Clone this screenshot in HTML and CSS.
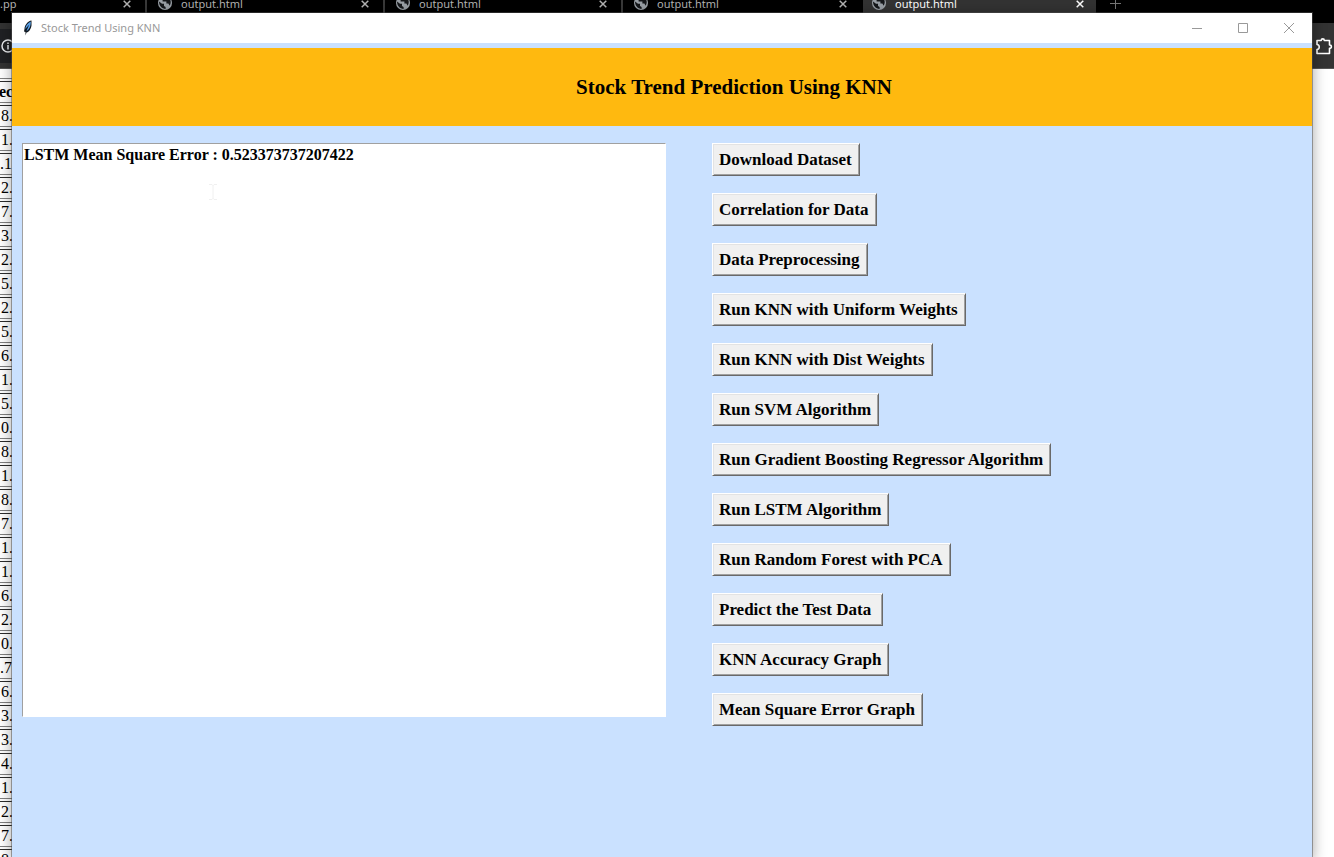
FILE: index.html
```html
<!DOCTYPE html>
<html lang="en">
<head>
<meta charset="utf-8">
<title>Stock Trend Using KNN</title>
<link rel="stylesheet" href="styles.css">
</head>
<body>
<svg class="defs" aria-hidden="true">
  <symbol id="globe" viewBox="0 0 14 14"><circle cx="7" cy="7" r="7" fill="#9aa0a6"/><path d="M1 5.600L4 7.800H6V10L7.600 11V13C4 13 1 10 1 5.600ZM8 1C7 1 5.600 2 5.600 3.200L4.600 4V5.600H8.400V7.600H10.400L11.600 9.800C13.500 7 13 3 10 1.700V3H8Z" fill="#15171a"/></symbol>
  <symbol id="cross" viewBox="0 0 8 8"><path d="M.7.7 7.300 7.300M7.300.7.7 7.300" fill="none" stroke="currentColor" stroke-width="1.500"/></symbol>
</svg>
<div class="desktop">
  <div class="browser">
    <nav class="tabs" aria-label="Tabs">
      <div class="tab tab-first"><span class="tab-name">.pp</span><button class="tab-close" aria-label="Close tab"><svg><use href="#cross"/></svg></button></div>
      <div class="tab"><svg class="globe"><use href="#globe"/></svg><span class="tab-name">output.html</span><button class="tab-close" aria-label="Close tab"><svg><use href="#cross"/></svg></button></div>
      <div class="tab"><svg class="globe"><use href="#globe"/></svg><span class="tab-name">output.html</span><button class="tab-close" aria-label="Close tab"><svg><use href="#cross"/></svg></button></div>
      <div class="tab tab-before"><svg class="globe"><use href="#globe"/></svg><span class="tab-name">output.html</span><button class="tab-close" aria-label="Close tab"><svg><use href="#cross"/></svg></button></div>
      <div class="tab tab-active"><svg class="globe"><use href="#globe"/></svg><span class="tab-name">output.html</span><button class="tab-close" aria-label="Close tab"><svg><use href="#cross"/></svg></button></div>
      <button class="tab-new" aria-label="New tab"><svg viewBox="0 0 11 11"><path d="M5.500 0V11M0 5.500H11" stroke="currentColor" fill="none"/></svg></button>
    </nav>
    <div class="toolbar">
      <div class="address"><svg viewBox="0 0 14 14"><circle cx="7" cy="7" r="6" fill="none" stroke="#e8eaed" stroke-width="1.500"/><path d="M7 6V10.500M7 3.500V5" stroke="#e8eaed" stroke-width="1.500"/></svg></div>
      <button class="extensions" aria-label="Extensions"><svg viewBox="0 0 18 18"><path d="M2 3.500H6.200C6.200 1.300 9.300 1.300 9.300 3.500H14.500V8C17 8 17 11.300 14.500 11.300V16.500H2V12.500C5 12.200 5 7.800 2 7.500Z" fill="none" stroke="#fff" stroke-width="1.600" stroke-linejoin="round"/></svg></button>
    </div>
    <table class="data">
      <thead><tr><th>ec</th></tr></thead>
      <tbody>
        <tr><td>8.</td></tr><tr><td>1.</td></tr><tr><td class="shifted">.1</td></tr><tr><td>2.</td></tr>
        <tr><td>7.</td></tr><tr><td>3.</td></tr><tr><td>2.</td></tr><tr><td>5.</td></tr>
        <tr><td>2.</td></tr><tr><td>5.</td></tr><tr><td>6.</td></tr><tr><td>1.</td></tr>
        <tr><td>5.</td></tr><tr><td>0.</td></tr><tr><td>8.</td></tr><tr><td>1.</td></tr>
        <tr><td>8.</td></tr><tr><td>7.</td></tr><tr><td>1.</td></tr><tr><td>1.</td></tr>
        <tr><td>6.</td></tr><tr><td>2.</td></tr><tr><td>0.</td></tr><tr><td class="shifted">.7</td></tr>
        <tr><td>6.</td></tr><tr><td>3.</td></tr><tr><td>3.</td></tr><tr><td>4.</td></tr>
        <tr><td>1.</td></tr><tr><td>2.</td></tr><tr><td>7.</td></tr><tr><td>8.</td></tr>
      </tbody>
    </table>
  </div>

  <main class="window">
    <header class="titlebar">
      <svg class="feather" viewBox="0 0 10 16"><path d="M8.500.5C5 1 1.500 5 1.500 9L1 11.500L2.500 12V15.500L3.500 12.500C6 12 8 9 8.500 5.500Z" fill="#101820"/><path d="M7.800 1.500C4.500 3 2.500 6 2.300 9L6.300 4.500L3.500 11C6 10 7.900 6.500 7.800 1.500Z" fill="#5aa2ea"/></svg>
      <span class="caption">Stock Trend Using KNN</span>
      <button class="win-button" aria-label="Minimize"><svg viewBox="0 0 12 12"><path d="M1 6.500H11"/></svg></button>
      <button class="win-button" aria-label="Maximize"><svg viewBox="0 0 12 12"><path d="M1.500 1.500H10.500V10.500H1.500Z"/></svg></button>
      <button class="win-button" aria-label="Close"><svg viewBox="0 0 12 12"><path d="M1 1 11 11M11 1 1 11"/></svg></button>
    </header>
    <h1 class="banner">Stock Trend Prediction Using KNN</h1>
    <div class="content">
      <div class="log-wrap">
        <textarea class="log" rows="30" aria-label="Output" spellcheck="false">LSTM Mean Square Error : 0.523373737207422</textarea>
        <svg class="pointer" viewBox="0 0 8 16"><path d="M0 .5H3L4 1.500L5 .5H8M0 15.500H3L4 14.500L5 15.500H8M4 1V15" fill="none" stroke="#f0f0f0"/></svg>
      </div>
      <div class="actions">
        <button class="action">Download Dataset</button>
        <button class="action">Correlation for Data</button>
        <button class="action">Data Preprocessing</button>
        <button class="action">Run KNN with Uniform Weights</button>
        <button class="action">Run KNN with Dist Weights</button>
        <button class="action">Run SVM Algorithm</button>
        <button class="action">Run Gradient Boosting Regressor Algorithm</button>
        <button class="action">Run LSTM Algorithm</button>
        <button class="action">Run Random Forest with PCA</button>
        <button class="action">Predict the Test Data&nbsp;</button>
        <button class="action">KNN Accuracy Graph</button>
        <button class="action">Mean Square Error Graph</button>
      </div>
    </div>
  </main>
</div>
</body>
</html>
```

FILE: styles.css
```css
* { box-sizing: border-box; }
body { margin: 0; background: #fff; }
button { margin: 0; padding: 0; border: 0; background: none; color: inherit; font: inherit; }
svg { display: block; }
.defs { position: absolute; width: 0; height: 0; }

.desktop { position: relative; height: 100vh; overflow: hidden; }

/* Browser behind the application window */
.tabs { display: flex; height: 23px; background: #000; color: #b4b4b4; font: 11px/8px "Noto Sans", sans-serif; }
.tab { display: flex; align-items: flex-start; flex: 0 0 238px; height: 13px; padding: 0 14px 0 11px; border-right: 2px solid #3a3a3a; }
.tab-first { flex-basis: 147px; padding-left: 0; padding-right: 14px; }
.tab-before { flex-basis: 240px; border-color: transparent; }
.tab-active { flex-basis: 233px; padding-left: 9px; padding-right: 12px; border: 0; background: #333; color: #fff; }
.globe { flex: none; width: 14px; height: 14px; margin: -4px 9px 0 0; }
.tab-name { flex: 1; }
.tab-close { width: 8px; height: 8px; }
.tab-close svg { width: 8px; height: 8px; }
.tab-new { width: 11px; height: 11px; margin: -2px 0 0 14px; color: #777; }
.tab-new svg { width: 11px; height: 11px; }
.toolbar { display: flex; align-items: center; justify-content: space-between; height: 46px; background: #333; border-bottom: 1px solid #555; }
.address { padding: 10px 0; background: #202124; }
.address svg { width: 14px; height: 14px; margin-left: 1px; }
.extensions svg { width: 18px; height: 18px; margin-right: 1px; }

.data { width: 40px; margin: 9px 0 0 -4px; border-top: 1px solid #808080; border-spacing: 0 2px; font: 16px/20px "Liberation Serif", serif; }
.data th, .data td { height: 22px; padding: 0 0 0 5px; border-top: 1px solid #2c2c2c; border-bottom: 1px solid #808080; text-align: left; }
.data th { padding-left: 3px; }
.data .shifted { padding-left: 4px; }

/* Application window */
.window { position: absolute; inset: 13px 22px 0 12px; background: #cae1ff; box-shadow: 0 0 0 1px rgba(80, 80, 80, .5), 0 2px 12px 2px rgba(0, 0, 0, .3); }
.titlebar { display: flex; align-items: center; height: 30px; padding-left: 11px; background: #fff; color: #999; font: 11px/16px "Noto Sans", sans-serif; }
.feather { width: 10px; height: 16px; margin-right: 8px; }
.caption { flex: 1; }
.win-button { display: flex; align-items: center; justify-content: center; width: 46px; height: 30px; }
.win-button svg { width: 12px; height: 12px; fill: none; stroke: #999; }
.banner { margin: 5px 0 0; padding: 26px 0 26px 144px; background: #ffb90f; color: #000; text-align: center; font: bold 21px/26px "Liberation Serif", serif; }
.content { display: grid; grid-template-columns: minmax(0, 644fr) minmax(0, 590fr); column-gap: 46px; align-items: start; padding: 17px 10px; }
.log-wrap { position: relative; }
.log { display: block; width: 100%; padding: 1px; border: 1px solid; border-color: #a0a0a0 #fff #fff #a0a0a0; outline: 0; resize: none; background: #fff; color: #000; font: bold 16px/19px "Liberation Serif", serif; }
.pointer { position: absolute; left: 187px; top: 41px; width: 8px; height: 16px; }
.actions { display: flex; flex-direction: column; align-items: flex-start; gap: 17px; }
.action { padding: 5px 7px 4px 6px; border: 1px solid; border-color: #fff #696969 #696969 #fff; box-shadow: inset 1px 1px #e3e3e3, inset -1px -1px #a0a0a0; background: #f0f0f0; color: #000; font: bold 17px/22px "Liberation Serif", serif; white-space: nowrap; }
```
